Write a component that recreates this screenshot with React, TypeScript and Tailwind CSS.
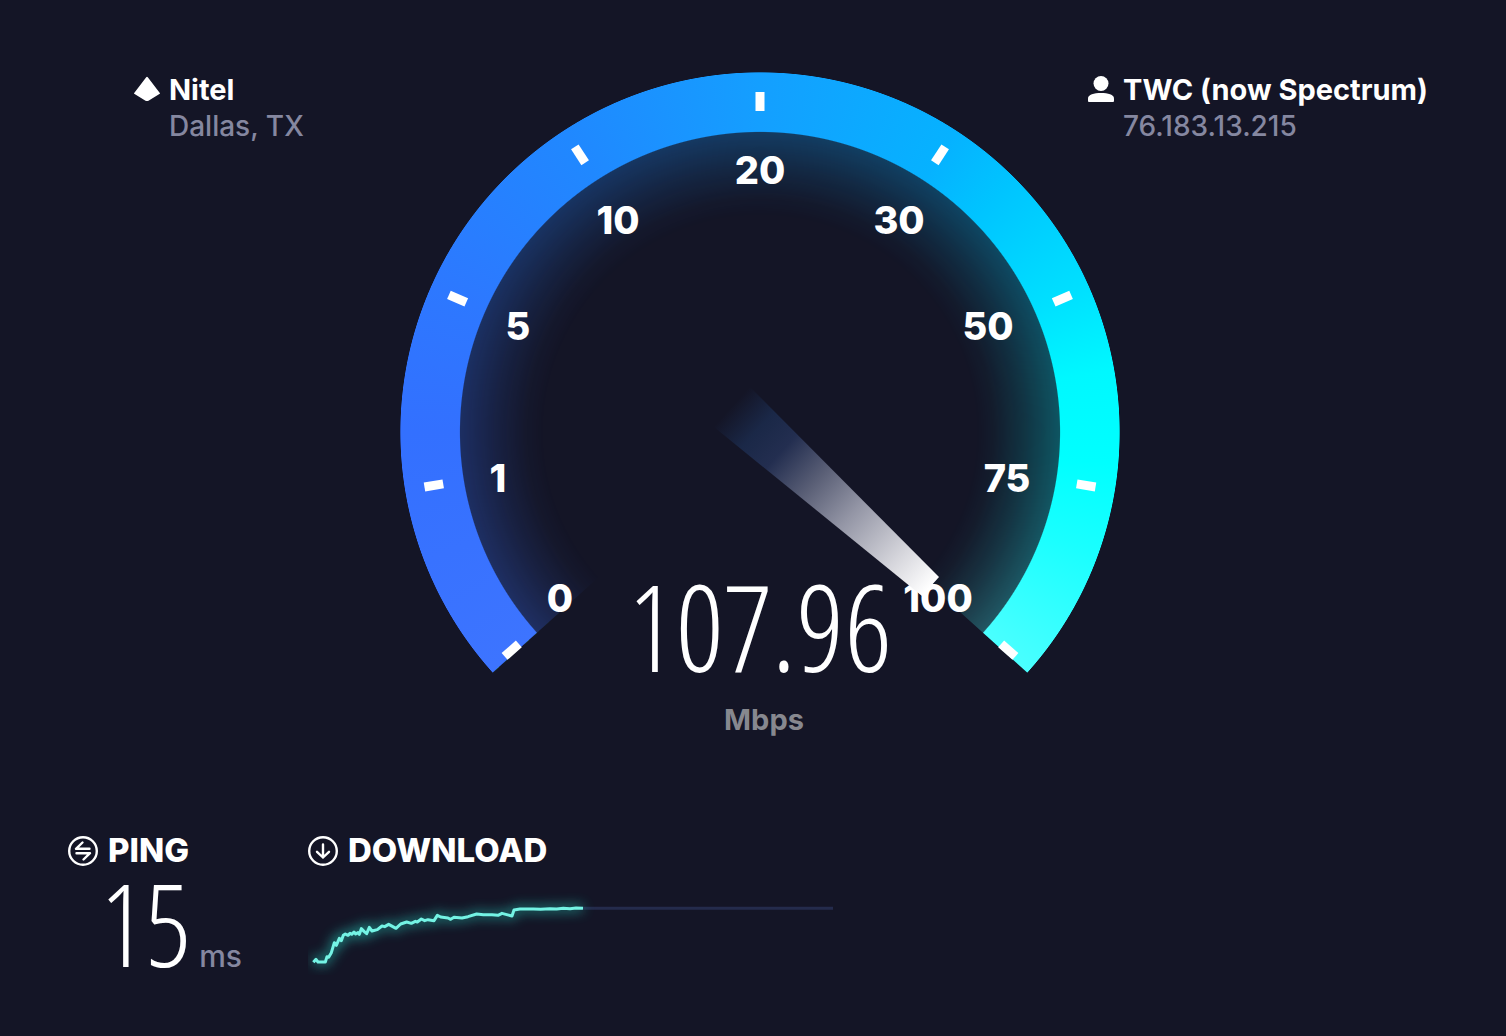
import { ReactNode } from 'react';

interface Mark {
  label: string;
  angle: number;
  x: number;
  y: number;
}

// angle is measured from 12 o'clock, x/y is the centre and baseline of the label
const marks: Mark[] = [
  { label: '0', angle: -131.3, x: 160, y: 540 },
  { label: '1', angle: -99.3, x: 98, y: 420 },
  { label: '5', angle: -66.2, x: 118, y: 268 },
  { label: '10', angle: -33, x: 218, y: 162 },
  { label: '20', angle: 0, x: 360, y: 112 },
  { label: '30', angle: 33, x: 499, y: 162 },
  { label: '50', angle: 66.2, x: 588, y: 268 },
  { label: '75', angle: 99.3, x: 607, y: 420 },
  { label: '100', angle: 131.3, x: 538, y: 540 },
];

const samples =
  '70,427 78,418 84,426 106,426 111,410 116,412 124,398 133,368 139,376 148,355 154,362 160,346 166,342 174,346 180,340 185,343 192,336 197,342 204,338 208,343 214,326 222,334 230,341 238,322 246,333 262,329 276,318 284,320 296,313 318,325 332,312 350,306 364,310 376,304 382,306 394,297 404,302 414,299 432,302 442,286 452,291 474,294 482,298 492,292 516,294 534,290 560,282 580,284 606,284 624,286 636,280 666,288 672,270 690,267 730,267 752,268 780,266 800,267 820,265 840,266 858,264 879,265';

function Host({ icon, name, detail }: { icon: ReactNode; name: string; detail: string }) {
  return (
    <div className="flex gap-[9px]">
      <div className="flex h-[34px] items-center">{icon}</div>
      <div>
        <h2 className="text-[29px] leading-9 font-bold">{name}</h2>
        <p className="text-[28px] leading-9 font-medium text-[#8587a0]">{detail}</p>
      </div>
    </div>
  );
}

function ServerIcon() {
  return (
    <svg viewBox="0 0 26 26" className="h-[26px] w-[26px]" fill="currentColor" aria-hidden="true">
      <path d="M12.200 1.200q.8-.8 1.600 0L25.800 17q.3.700-.4 1.100L14.500 24.700q-1.500.8-3 0L.6 18.100q-.7-.4-.4-1.100Z" />
    </svg>
  );
}

function UserIcon() {
  return (
    <svg viewBox="0 0 26 26" className="h-[26px] w-[26px]" fill="currentColor" aria-hidden="true">
      <circle cx="13" cy="7.500" r="7.500" />
      <path d="M0 22.500C0 18.500 6 17 13 17s13 1.500 13 5.500V25q0 1-1 1H1q-1 0-1-1Z" />
    </svg>
  );
}

function PingIcon() {
  return (
    <svg viewBox="0 0 30 30" className="h-[30px] w-[30px]" fill="none" stroke="currentColor" strokeWidth="2.400" strokeLinecap="round" strokeLinejoin="round" aria-hidden="true">
      <circle cx="15" cy="15" r="13.800" />
      <path d="M14.500 6.500 8 12.800H21.500M8.500 17.200H22L15.500 23.500" />
    </svg>
  );
}

function DownloadIcon() {
  return (
    <svg viewBox="0 0 30 30" className="h-[30px] w-[30px]" fill="none" stroke="currentColor" strokeWidth="2.400" strokeLinecap="round" strokeLinejoin="round" aria-hidden="true">
      <circle cx="15" cy="15" r="13.800" />
      <path d="M15 8.500v13M9 15.800l6 5.700 6-5.700" />
    </svg>
  );
}

function Gauge() {
  return (
    <div className="grid aspect-square w-full max-w-[720px]">
      {/* Arc and its inner glow */}
      <div className="[grid-area:1/1] [clip-path:polygon(0_0,100%_0,100%_95%,50%_50%,0_95%)]">
        <div className="h-full w-full bg-[conic-gradient(from_228deg,#3d74ff_0deg,#3370ff_42deg,#2d78ff_66deg,#2088ff_99deg,#149fff_132deg,#06b2ff_165deg,#00c4ff_177deg,#00e0ff_198deg,#00f8ff_212deg,#00ffff_227deg,#1affff_242deg,#4affff_264deg)] [mask-image:radial-gradient(circle_closest-side,transparent_60%,rgba(0,0,0,0.03)_65%,rgba(0,0,0,0.13)_73%,rgba(0,0,0,0.28)_83.200%,#000_83.500%,#000_99.800%,transparent_100%)]" />
      </div>
      <svg viewBox="0 0 720 720" className="relative h-full w-full [grid-area:1/1]" role="img" aria-label="Download speed gauge">
        <defs>
          <linearGradient id="needle" gradientUnits="userSpaceOnUse" x1="332" y1="334" x2="530" y2="515">
            <stop offset="0" stopColor="#1a2a4c" stopOpacity="0" />
            <stop offset="0.13" stopColor="#1b2a4b" stopOpacity="0.9" />
            <stop offset="0.25" stopColor="#232e50" />
            <stop offset="0.42" stopColor="#5a5f76" />
            <stop offset="0.6" stopColor="#9395a5" />
            <stop offset="0.84" stopColor="#d6d6dc" />
            <stop offset="1" stopColor="#ffffff" />
          </linearGradient>
        </defs>
        {marks.map((m) => (
          <g key={m.label} fill="#fff">
            <rect x="355.500" y="20" width="9" height="19" transform={`rotate(${m.angle} 360 360)`} />
            <text x={m.x} y={m.y} textAnchor="middle" className="text-[38px] font-extrabold">
              {m.label}
            </text>
          </g>
        ))}
        <path d="M350 315 539 505 522 524 314 355Z" fill="url(#needle)" />
      </svg>
      <div className="relative self-end pb-[54px] text-center [grid-area:1/1]">
        <div className="mb-4 font-['Open_Sans_Condensed_Light','Open_Sans_Condensed','Open_Sans',sans-serif] text-[120px] leading-[120px] font-light">
          107.96
        </div>
        <div className="pl-2 text-[29px] leading-9 font-bold text-[#87888f]">Mbps</div>
      </div>
    </div>
  );
}

export default function App() {
  return (
    <main className="min-h-screen bg-[#141526] pt-[72px] pb-14 font-['Inter','Liberation_Sans',sans-serif] text-white">
      <header className="flex justify-between pr-[78px] pl-[134px]">
        <Host icon={<ServerIcon />} name="Nitel" detail="Dallas, TX" />
        <Host icon={<UserIcon />} name="TWC (now Spectrum)" detail="76.183.13.215" />
      </header>

      <section className="-mt-[72px] flex justify-center pl-[14px]">
        <Gauge />
      </section>

      <section className="mt-[41px] flex pl-[68px]">
        <div className="w-60 shrink-0">
          <h3 className="flex h-9 items-center gap-[10px] text-[33px] font-extrabold">
            <PingIcon />
            PING
          </h3>
          <p className="flex items-baseline gap-2 pl-8 leading-[108px]">
            <span className="font-['Open_Sans_Condensed_Light','Open_Sans_Condensed','Open_Sans',sans-serif] text-[114px] font-light">15</span>
            <span className="text-[30px] font-medium text-[#8587a0]">ms</span>
          </p>
        </div>
        <div className="max-w-[530px] flex-1">
          <h3 className="flex h-9 items-center gap-[10px] text-[33px] font-extrabold">
            <DownloadIcon />
            DOWNLOAD
          </h3>
          <svg viewBox="54 195 1590 270" className="mt-4 w-full" fill="none" aria-hidden="true">
            <defs>
              <filter id="glow" x="-10%" y="-50%" width="120%" height="200%">
                <feGaussianBlur stdDeviation="18" />
              </filter>
            </defs>
            <path d="M879 265H1629" stroke="#242b4c" strokeWidth="9" />
            <polyline points={samples} stroke="#25d9c4" strokeWidth="20" opacity="0.55" filter="url(#glow)" />
            <polyline points={samples} stroke="#74f3e4" strokeWidth="9" strokeLinejoin="round" />
          </svg>
        </div>
      </section>
    </main>
  );
}
